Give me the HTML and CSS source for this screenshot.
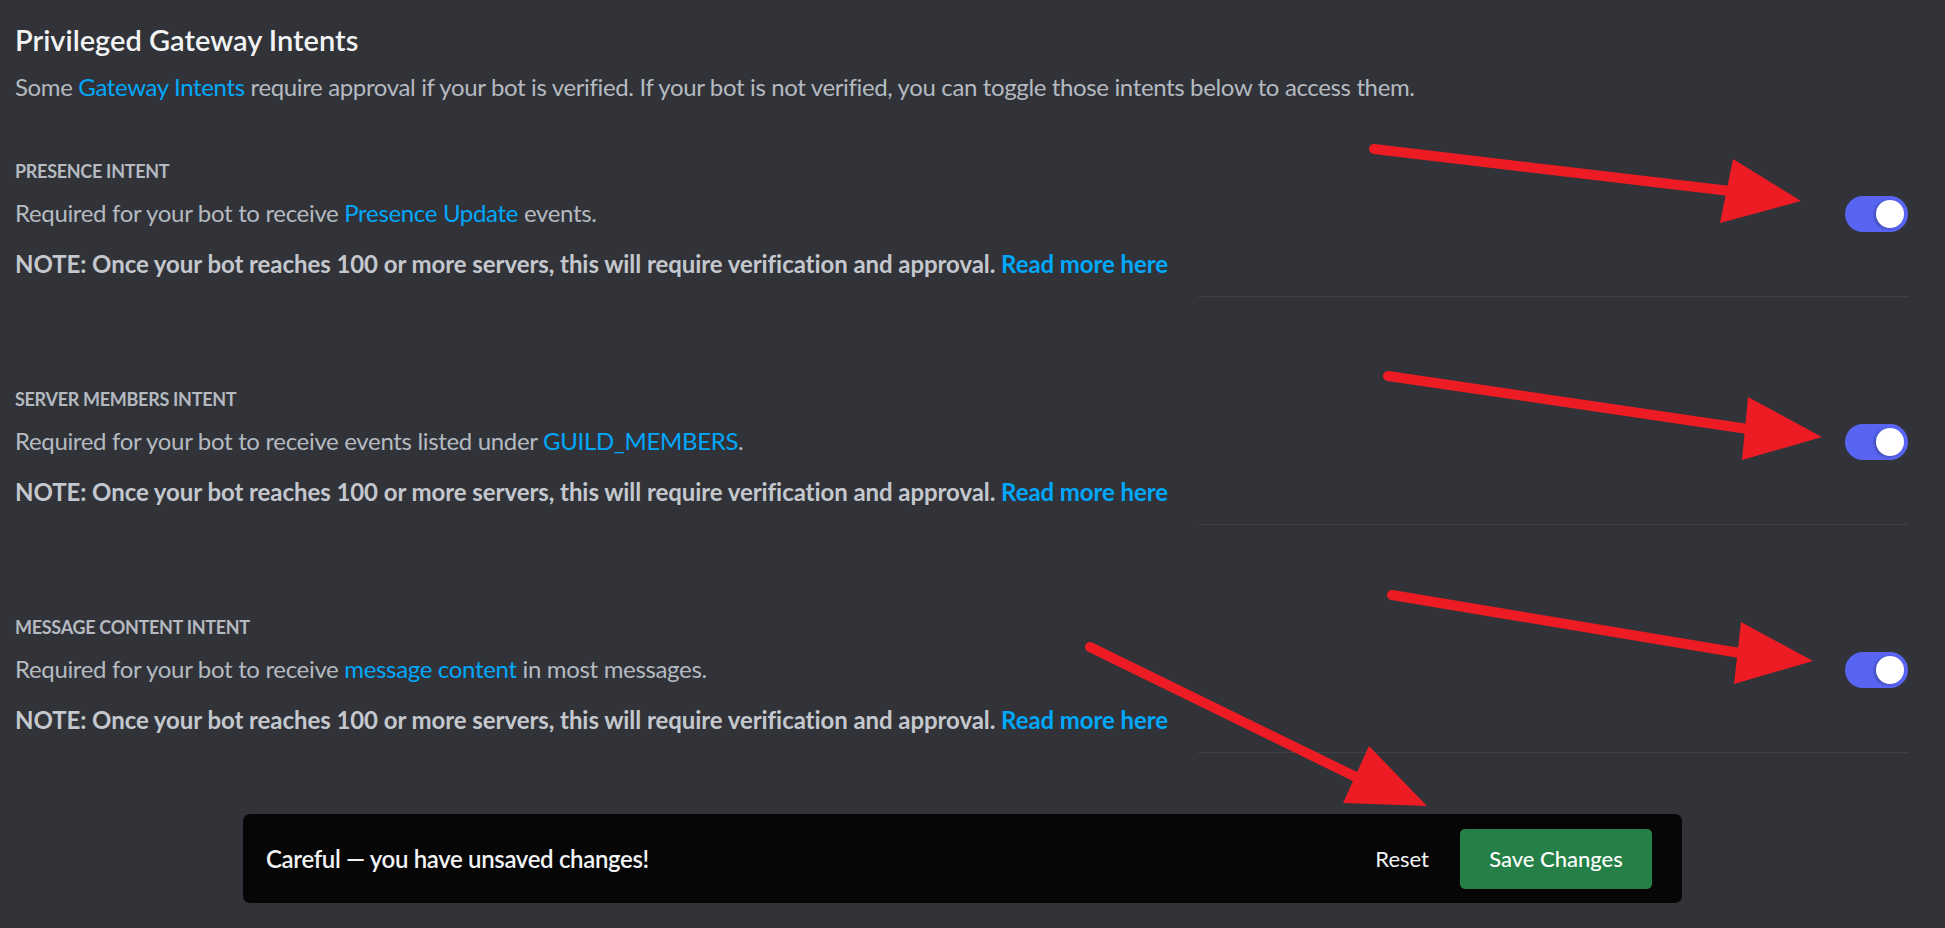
FILE: index.html
```html
<!DOCTYPE html>
<html lang="en">
<head>
<meta charset="utf-8">
<title>Privileged Gateway Intents</title>
<link rel="stylesheet" href="styles.css">
</head>
<body>
<main class="page">
  <h1 class="title">Privileged Gateway Intents</h1>
  <p class="subtitle">Some <a class="link">Gateway Intents</a> require approval if your bot is verified. If your bot is not verified, you can toggle those intents below to access them.</p>

  <section class="intent">
    <div class="intent-row">
      <div class="intent-text">
        <h2 class="intent-head">PRESENCE INTENT</h2>
        <p class="intent-desc">Required for your bot to receive <a class="link">Presence Update</a> events.</p>
        <p class="intent-note">NOTE: Once your bot reaches 100 or more servers, this will require verification and approval. <a class="link">Read more here</a></p>
      </div>
      <div class="toggle"><span class="knob"></span></div>
    </div>
    <div class="divider"></div>
  </section>

  <section class="intent">
    <div class="intent-row">
      <div class="intent-text">
        <h2 class="intent-head">SERVER MEMBERS INTENT</h2>
        <p class="intent-desc">Required for your bot to receive events listed under <a class="link">GUILD_MEMBERS</a>.</p>
        <p class="intent-note">NOTE: Once your bot reaches 100 or more servers, this will require verification and approval. <a class="link">Read more here</a></p>
      </div>
      <div class="toggle"><span class="knob"></span></div>
    </div>
    <div class="divider"></div>
  </section>

  <section class="intent">
    <div class="intent-row">
      <div class="intent-text">
        <h2 class="intent-head">MESSAGE CONTENT INTENT</h2>
        <p class="intent-desc">Required for your bot to receive <a class="link">message content</a> in most messages.</p>
        <p class="intent-note">NOTE: Once your bot reaches 100 or more servers, this will require verification and approval. <a class="link">Read more here</a></p>
      </div>
      <div class="toggle"><span class="knob"></span></div>
    </div>
    <div class="divider"></div>
  </section>

  <div class="notice">
    <span class="notice-text">Careful — you have unsaved changes!</span>
    <span class="reset">Reset</span>
    <span class="save">Save Changes</span>
  </div>
</main>

<svg class="arrows" width="1945" height="928" viewBox="0 0 1945 928" xmlns="http://www.w3.org/2000/svg">
  <g stroke="#ED1C24" stroke-width="10" stroke-linecap="round" fill="none">
    <line x1="1374" y1="149" x2="1730" y2="191"/>
    <line x1="1388" y1="376" x2="1748" y2="429"/>
    <line x1="1392" y1="595" x2="1740" y2="653"/>
    <line x1="1090" y1="647" x2="1358" y2="778"/>
  </g>
  <g fill="#ED1C24">
    <polygon points="1733,159 1801,201 1720,223"/>
    <polygon points="1748,397 1822,437 1742,460"/>
    <polygon points="1741,622 1813,661 1734,684"/>
    <polygon points="1369,746 1427,806 1343,803"/>
  </g>
</svg>
</body>
</html>
```

FILE: styles.css
```css
html, body {
  margin: 0;
  padding: 0;
  background: #313338;
}

body {
  width: 1945px;
  height: 928px;
  overflow: hidden;
  position: relative;
  font-family: Lato, "Liberation Sans", sans-serif;
}

.page {
  padding: 21px 37px 0 15px;
}

.title {
  margin: 0;
  font-size: 29px;
  line-height: 38px;
  font-weight: 600;
  color: #f2f3f5;
}

.subtitle {
  margin: 12px 0 0;
  font-size: 24px;
  line-height: 32px;
  letter-spacing: -0.36px;
  color: #b5bac1;
}

.link {
  color: #00a8fc;
  text-decoration: none;
}

.intent {
  margin-top: 56px;
}

.intent + .intent {
  margin-top: 90px;
}

.intent-row {
  display: flex;
  justify-content: space-between;
  align-items: flex-start;
}

.intent-head {
  margin: 0 0 14px;
  font-size: 18px;
  line-height: 24px;
  font-weight: 700;
  letter-spacing: -0.3px;
  color: #b5bac1;
}

.intent-desc {
  margin: 0 0 19px;
  font-size: 24px;
  line-height: 32px;
  letter-spacing: -0.33px;
  color: #b5bac1;
}

.intent-note {
  margin: 0;
  font-size: 24px;
  line-height: 32px;
  font-weight: 700;
  letter-spacing: -0.07px;
  color: #c4c8ce;
}

.toggle {
  margin-top: 37px;
  width: 63px;
  height: 36px;
  border-radius: 18px;
  background: #5865f2;
  display: flex;
  align-items: center;
  justify-content: flex-end;
  padding-right: 4px;
  box-sizing: border-box;
}

.knob {
  width: 28px;
  height: 28px;
  border-radius: 50%;
  background: #ffffff;
  box-shadow: -2px 1px 3px rgba(0, 0, 0, 0.25);
}

.divider {
  margin: 16px 0 0 auto;
  width: 710px;
  height: 1px;
  background: #3f4147;
}

.notice {
  margin: 61px 0 0 228px;
  width: 1439px;
  height: 89px;
  box-sizing: border-box;
  padding: 0 30px 0 23px;
  background: #060607;
  border-radius: 7px;
  display: flex;
  align-items: center;
}

.notice-text {
  flex: 1;
  font-size: 24px;
  font-weight: 600;
  letter-spacing: -0.35px;
  color: #f2f3f5;
}

.reset {
  margin-right: 31px;
  font-size: 22px;
  color: #f2f3f5;
}

.save {
  width: 192px;
  height: 60px;
  border-radius: 5px;
  background: #248046;
  color: #ffffff;
  font-size: 22px;
  font-weight: 500;
  display: flex;
  align-items: center;
  justify-content: center;
}

.arrows {
  position: absolute;
  left: 0;
  top: 0;
  pointer-events: none;
}
```
